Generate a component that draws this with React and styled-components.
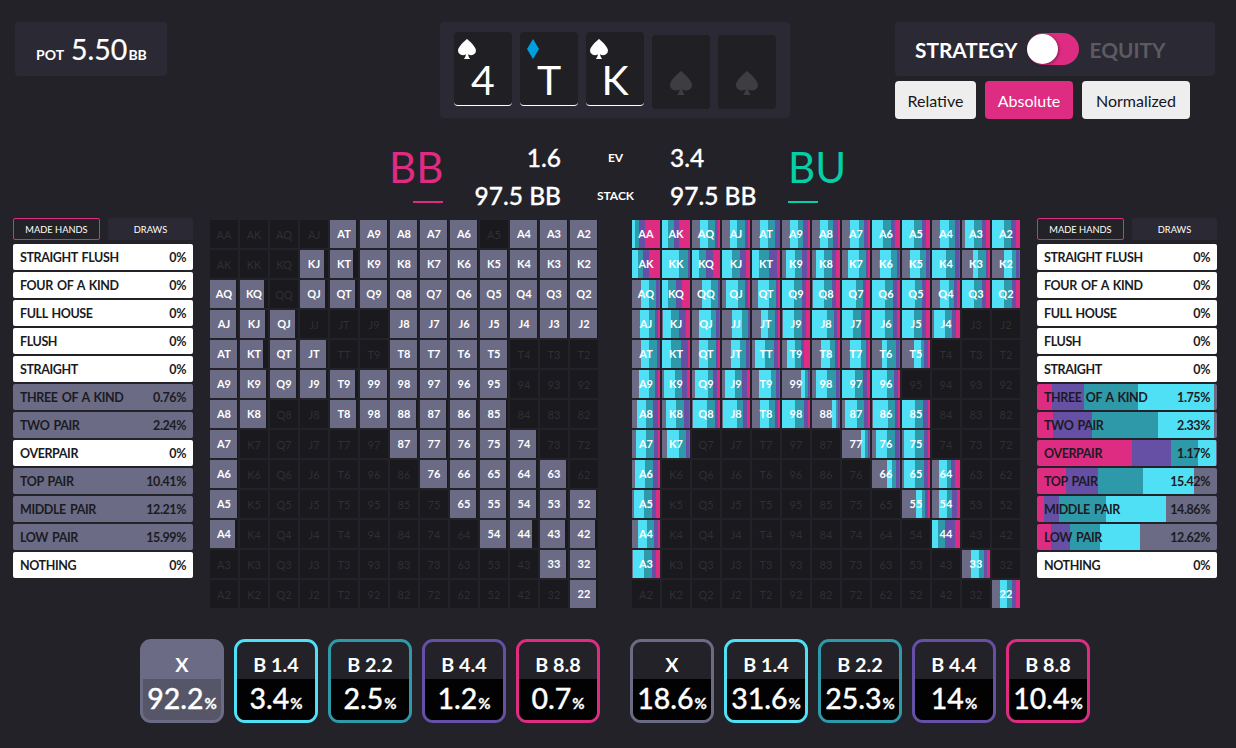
import React from "react";
import styled, { createGlobalStyle } from "styled-components";

const GRAY = "#6b6b85";
const CYAN = "#4fe0f6";
const TEAL = "#2e9aa9";
const PURPLE = "#6650a6";
const PINK = "#dd2c82";
const GREEN = "#05cfa6";

const GlobalStyle = createGlobalStyle`
  html, body {
    margin: 0;
    padding: 0;
    background: #232228;
    font-family: "Lato", "Liberation Sans", sans-serif;
    color: #fff;
  }
  * { box-sizing: border-box; }
`;

const Page = styled.div`
  width: 1236px;
  height: 748px;
  overflow: hidden;
`;

const Header = styled.header`
  display: grid;
  grid-template-columns: 425px 455px 320px;
  padding: 22px 0 0 15px;
  height: 119px;
  align-items: start;
`;

const Panel = styled.div`
  background: #2b2933;
  border-radius: 4px;
`;

const Pot = styled(Panel)`
  width: 152px;
  height: 54px;
  display: flex;
  align-items: baseline;
  padding: 9px 0 0 21px;
  font-weight: 700;
  font-size: 14px;
  b { font-weight: 400; font-size: 28.5px; margin: 0 1px 0 7px; line-height: 36px; -webkit-text-stroke: 0.2px #fff; }
`;

const Board = styled(Panel)`
  width: 350px;
  height: 96px;
  display: flex;
  align-items: flex-start;
  gap: 8px;
  padding: 10px 14px;
`;

const BoardCard = styled.div`
  width: 58px;
  height: 74px;
  background: #201f24;
  border-radius: 4px;
  border-bottom: 1px solid #fff;
  padding: 7px 0 0 4px;
`;

const EmptyCard = styled(BoardCard)`
  margin-top: 3px;
  border-bottom: 0;
  padding: 36px 0 0 18px;
`;

const Suit = styled.svg`
  display: block;
  width: ${(p) => p.$w}px;
  height: ${(p) => p.$h}px;
  margin-left: ${(p) => p.$x || 0}px;
  fill: ${(p) => p.$color};
`;

const Rank = styled.div`
  margin: -1px 0 0 -4px;
  text-align: center;
  font-size: 41px;
  line-height: 44px;
`;

const Controls = styled.div`
  display: flex;
  flex-direction: column;
  gap: 5px;
`;

const ModeSwitch = styled(Panel)`
  height: 54px;
  display: flex;
  align-items: center;
  padding: 0 0 0 20px;
  font-size: 20.8px;
  font-weight: 700;
`;

const ModeLabel = styled.span`
  color: ${(p) => (p.$off ? "#5c5b62" : "#fff")};
  margin-left: ${(p) => (p.$off ? 11 : 0)}px;
  margin-right: ${(p) => (p.$off ? 0 : 9)}px;
`;

const Toggle = styled.div`
  position: relative;
  width: 52px;
  height: 32px;
  border-radius: 16px;
  background: ${PINK};
  &::after {
    content: "";
    position: absolute;
    left: 0;
    top: 1px;
    width: 31px;
    height: 30px;
    border-radius: 50%;
    background: #fff;
    box-shadow: 1px 1px 3px rgba(0, 0, 0, 0.4);
  }
`;

const ScaleRow = styled.div`
  display: flex;
  gap: 9px;
`;

const ScaleButton = styled.div`
  width: ${(p) => p.$w}px;
  height: 38px;
  display: flex;
  align-items: center;
  justify-content: center;
  border-radius: 4px;
  font-size: 16px;
  background: ${(p) => (p.$active ? PINK : "#eee")};
  color: ${(p) => (p.$active ? "#fff" : "#17161b")};
`;

const Matchup = styled.section`
  display: grid;
  grid-template-columns: 54px 118px 109px 118px auto;
  grid-template-rows: 38px 38px;
  height: 99px;
  padding: 19px 0 0 389px;
  align-items: center;
`;

const Player = styled.div`
  grid-row: 1 / 3;
  grid-column: ${(p) => p.$col};
  width: 58px;
  height: 66px;
  align-self: start;
  font-size: 42px;
  line-height: 58px;
  color: ${(p) => p.$color};
  position: relative;
  &::after {
    content: "";
    position: absolute;
    top: 63px;
    ${(p) => (p.$right ? "left: 24px;" : "left: 0;")}
    width: 30px;
    height: 2px;
    background: ${(p) => p.$color};
  }
`;

const Stat = styled.div`
  grid-column: ${(p) => p.$col};
  font-size: 24.5px;
  font-weight: 500;
  text-align: ${(p) => (p.$col === 2 ? "right" : "left")};
  -webkit-text-stroke: 0.3px #fff;
`;

const StatLabel = styled.div`
  grid-column: 3;
  font-size: 12px;
  font-weight: 700;
  text-align: center;
`;

const Main = styled.main`
  display: flex;
  gap: 17px;
  padding-left: 13px;
  height: 390px;
`;

const Side = styled.aside`
  width: 180px;
  display: flex;
  flex-direction: column;
  gap: 2px;
`;

const Tabs = styled.div`
  display: grid;
  grid-template-columns: 87px 85px;
  gap: 8px;
  margin-bottom: 2px;
`;

const Tab = styled.div`
  height: 22px;
  display: flex;
  align-items: center;
  justify-content: center;
  border-radius: 2px;
  font-size: 9.3px;
  border: ${(p) => (p.$active ? `1px solid ${PINK}` : "0")};
  background: ${(p) => (p.$active ? "transparent" : "#2b2933")};
`;

const HandRow = styled.div`
  height: 26px;
  display: flex;
  align-items: center;
  justify-content: space-between;
  padding: 0 7px;
  border-radius: 2px;
  background: #fff;
  color: #1c1b22;
  font-size: 12.5px;
  font-weight: 700;
  letter-spacing: -0.4px;
  word-spacing: 1.5px;
`;

const Charts = styled.div`
  display: flex;
  gap: 34px;
  padding-top: 2px;
`;

const Chart = styled.div`
  display: grid;
  grid-template-columns: repeat(13, 28px);
  grid-auto-rows: 28px;
  gap: 2px;
`;

const Cell = styled.div`
  display: flex;
  align-items: center;
  justify-content: center;
  background-color: #1a191d;
  font-size: 11px;
  font-weight: ${(p) => (p.$on ? 700 : 400)};
  color: ${(p) => (p.$on ? "#fff" : "#302f33")};
  padding-bottom: ${(p) => (p.$on ? 2 : 0)}px;
`;

const Actions = styled.section`
  display: flex;
  gap: 30px;
  padding: 31px 0 0 140px;
`;

const ActionGroup = styled.div`
  display: flex;
  gap: 10px;
`;

const ActionCard = styled.div`
  width: 84px;
  height: 84px;
  display: flex;
  flex-direction: column;
  border: 3px solid ${(p) => p.$color};
  border-radius: 11px;
  overflow: hidden;
  background: ${(p) => (p.$selected ? p.$color : "transparent")};
`;

const ActionName = styled.div`
  height: 37px;
  flex: none;
  display: flex;
  align-items: center;
  justify-content: center;
  padding-top: 6px;
  font-size: 19.8px;
  font-weight: 700;
`;

const ActionValue = styled.div`
  flex: 1;
  display: flex;
  align-items: baseline;
  justify-content: center;
  padding-top: 1px;
  background: ${(p) => (p.$selected ? "#565668" : "#020203")};
  font-size: 28.5px;
  font-weight: 500;
  line-height: 36px;
  -webkit-text-stroke: 0.3px #fff;
  span { font-size: 15px; font-weight: 700; margin-left: 1px; }
`;

const SPADE =
  "M12 0C12 0 2 8.500 2 14a5.400 5.400 0 0 0 8.800 4.200c-.2 2.300-1 4-2.300 5.800h7c-1.300-1.800-2.100-3.500-2.300-5.800A5.400 5.400 0 0 0 22 14C22 8.500 12 0 12 0z";
const DIAMOND = "M12 0 22 12 12 24 2 12z";

const RANKS = "AKQJT98765432".split("");

// fill width in px of each cell, 0 means the hand is out of the range
const BB_FILLS = [
  [0, 0, 0, 0, 26, 27, 27, 27, 27, 0, 27, 27, 27],
  [0, 0, 0, 24, 23, 27, 27, 27, 27, 27, 27, 27, 27],
  [26, 24, 0, 25, 25, 27, 27, 27, 27, 27, 27, 27, 27],
  [26, 25, 25, 0, 0, 0, 27, 27, 27, 27, 27, 27, 27],
  [27, 23, 26, 26, 0, 0, 27, 27, 27, 27, 0, 0, 0],
  [27, 26, 26, 26, 25, 27, 27, 27, 27, 27, 0, 0, 0],
  [27, 26, 0, 0, 26, 27, 26, 26, 26, 26, 0, 0, 0],
  [27, 0, 0, 0, 0, 0, 27, 26, 26, 26, 26, 0, 0],
  [27, 0, 0, 0, 0, 0, 0, 27, 26, 26, 26, 26, 0],
  [27, 0, 0, 0, 0, 0, 0, 0, 26, 26, 26, 26, 26],
  [25, 0, 0, 0, 0, 0, 0, 0, 0, 26, 22, 25, 25],
  [0, 0, 0, 0, 0, 0, 0, 0, 0, 0, 0, 26, 26],
  [0, 0, 0, 0, 0, 0, 0, 0, 0, 0, 0, 0, 26],
];

// px of gray, cyan, teal, purple, pink in each cell
const BU_MIX = [
  ["0 3 4 6 15", "0 6 6 5 11", "8 8 7 3 2", "8 7 8 3 2", "8 8 7 5 0", "8 8 5 5 2", "8 8 5 5 2", "8 9 5 4 2", "0 11 8 4 5", "0 12 8 4 4", "8 9 6 4 1", "3 9 8 4 4", "0 12 7 5 4"],
  ["0 6 5 6 11", "0 17 9 2 0", "0 7 7 7 7", "0 10 8 6 4", "0 7 10 8 3", "4 9 7 5 3", "4 8 8 4 4", "6 11 7 2 2", "8 11 6 2 1", "8 10 6 3 1", "0 14 9 4 1", "11 5 8 2 2", "12 8 4 3 1"],
  ["9 8 7 3 1", "0 6 8 6 8", "10 9 7 2 0", "4 12 7 3 2", "6 11 7 2 2", "0 12 8 4 4", "1 11 8 4 4", "0 14 7 3 4", "0 13 8 4 3", "0 13 7 4 4", "8 9 5 3 3", "0 12 8 4 4", "0 12 8 4 4"],
  ["8 9 6 3 2", "1 8 8 7 4", "7 12 5 3 1", "10 10 6 2 0", "9 7 7 3 2", "1 11 8 4 4", "0 15 7 3 3", "0 11 8 4 5", "0 13 8 4 3", "0 12 8 4 4", "2 11 7 4 4"],
  ["9 8 8 3 0", "0 9 10 7 2", "7 9 8 2 2", "9 9 6 3 1", "3 10 9 4 2", "5 8 6 3 6", "9 9 5 3 2", "8 11 5 2 2", "10 5 9 3 1", "12 7 3 4 2"],
  ["7 10 6 3 2", "2 11 7 5 3", "3 13 5 4 3", "3 10 7 5 3", "7 12 5 3 1", "19 4 3 1 1", "4 11 9 3 1", "0 13 8 4 3", "0 15 7 4 2"],
  ["5 9 7 5 2", "4 10 8 5 1", "1 14 8 3 2", "1 14 6 4 3", "8 9 6 3 2", "0 13 9 4 2", "20 4 2 1 1", "3 12 7 4 2", "1 15 7 3 2", "0 13 8 5 2"],
  ["4 10 8 4 2", "5 12 7 3 1", "", "", "", "", "", "19 4 3 1 1", "4 11 8 4 1", "2 11 9 4 2"],
  ["3 10 8 5 2", "", "", "", "", "", "", "", "15 5 4 3 1", "2 11 9 4 2", "7 8 4 4 5"],
  ["2 10 8 4 4", "", "", "", "", "", "", "", "", "14 6 3 3 2", "7 8 5 5 3"],
  ["6 9 7 4 2", "", "", "", "", "", "", "", "", "", "0 6 7 10 5"],
  ["1 11 8 4 4", "", "", "", "", "", "", "", "", "", "", "9 8 5 3 3"],
  ["", "", "", "", "", "", "", "", "", "", "", "", "8 7 5 4 4"],
];

const MIX_COLORS = [GRAY, CYAN, TEAL, PURPLE, PINK];

// hard-edged gradient out of a list of [colour, px] pairs
const stripes = (parts) => {
  let at = 0;
  const stops = parts.map(([color, size]) => {
    const stop = `${color} ${at}px ${at + size}px`;
    at += size;
    return stop;
  });
  return `linear-gradient(90deg, ${stops.join(", ")})`;
};

const handLabel = (r, c) => (r <= c ? RANKS[r] + RANKS[c] : RANKS[c] + RANKS[r]);

const BBChart = () => (
  <Chart>
    {BB_FILLS.map((row, r) =>
      row.map((w, c) => (
        <Cell
          key={c}
          $on={w > 0}
          style={w ? { backgroundImage: stripes([[GRAY, w]]), backgroundSize: `${w}px 100%`, backgroundRepeat: "no-repeat" } : undefined}
        >
          {handLabel(r, c)}
        </Cell>
      ))
    )}
  </Chart>
);

const BUChart = () => (
  <Chart>
    {RANKS.map((_, r) =>
      RANKS.map((__, c) => {
        const mix = BU_MIX[r][c];
        const parts = mix ? mix.split(" ").map((v, i) => [MIX_COLORS[i], Number(v)]) : null;
        return (
          <Cell key={c} $on={!!mix} style={parts ? { backgroundImage: stripes(parts) } : undefined}>
            {handLabel(r, c)}
          </Cell>
        );
      })
    )}
  </Chart>
);

const HANDS = ["STRAIGHT FLUSH", "FOUR OF A KIND", "FULL HOUSE", "FLUSH", "STRAIGHT", "THREE OF A KIND", "TWO PAIR", "OVERPAIR", "TOP PAIR", "MIDDLE PAIR", "LOW PAIR", "NOTHING"];
const BB_HANDS = ["0%", "0%", "0%", "0%", "0%", "0.76%", "2.24%", "0%", "10.41%", "12.21%", "15.99%", "0%"];
const BU_HANDS = ["0%", "0%", "0%", "0%", "0%", "1.75%", "2.33%", "1.17%", "15.42%", "14.86%", "12.62%", "0%"];

// px of pink, purple, teal, cyan, gray in each BU hand bar
const BU_BARS = {
  "THREE OF A KIND": [15, 32, 54, 76, 3],
  "TWO PAIR": [16, 39, 66, 56, 3],
  OVERPAIR: [95, 39, 27, 18, 1],
  "TOP PAIR": [29, 32, 45, 51, 23],
  "MIDDLE PAIR": [7, 15, 47, 60, 51],
  "LOW PAIR": [14, 19, 30, 40, 77],
};
const BAR_COLORS = [PINK, PURPLE, TEAL, CYAN, GRAY];

const HandList = ({ values, bars }) => (
  <Side>
    <Tabs>
      <Tab $active>MADE HANDS</Tab>
      <Tab>DRAWS</Tab>
    </Tabs>
    {HANDS.map((name, i) => {
      const empty = values[i] === "0%";
      let background;
      if (!empty) {
        background = bars ? stripes(bars[name].map((w, j) => [BAR_COLORS[j], w])) : GRAY;
      }
      return (
        <HandRow key={name} style={background ? { background } : undefined}>
          <span>{name}</span>
          <span>{values[i]}</span>
        </HandRow>
      );
    })}
  </Side>
);

const ACTION_NAMES = ["X", "B 1.4", "B 2.2", "B 4.4", "B 8.8"];

const ActionList = ({ values, selected }) => (
  <ActionGroup>
    {ACTION_NAMES.map((name, i) => (
      <ActionCard key={name} $color={MIX_COLORS[i]} $selected={i === selected}>
        <ActionName>{name}</ActionName>
        <ActionValue $selected={i === selected}>
          {values[i]}
          <span>%</span>
        </ActionValue>
      </ActionCard>
    ))}
  </ActionGroup>
);

const Icon = ({ d, w, h, x, color }) => (
  <Suit viewBox="2 0 20 24" preserveAspectRatio="none" $w={w} $h={h} $x={x} $color={color}>
    <path d={d} />
  </Suit>
);

const App = () => (
  <Page>
    <GlobalStyle />
    <Header>
      <Pot>
        POT<b>5.50</b>BB
      </Pot>
      <Board>
        <BoardCard>
          <Icon d={SPADE} w={18} h={20} color="#fff" />
          <Rank>4</Rank>
        </BoardCard>
        <BoardCard>
          <Icon d={DIAMOND} w={12} h={20} x={3} color="#00a0e0" />
          <Rank>T</Rank>
        </BoardCard>
        <BoardCard>
          <Icon d={SPADE} w={18} h={20} color="#fff" />
          <Rank>K</Rank>
        </BoardCard>
        <EmptyCard>
          <Icon d={SPADE} w={22} h={24} color="#3e3d42" />
        </EmptyCard>
        <EmptyCard>
          <Icon d={SPADE} w={22} h={24} color="#3e3d42" />
        </EmptyCard>
      </Board>
      <Controls>
        <ModeSwitch>
          <ModeLabel>STRATEGY</ModeLabel>
          <Toggle />
          <ModeLabel $off>EQUITY</ModeLabel>
        </ModeSwitch>
        <ScaleRow>
          <ScaleButton $w={81}>Relative</ScaleButton>
          <ScaleButton $w={88} $active>Absolute</ScaleButton>
          <ScaleButton $w={108}>Normalized</ScaleButton>
        </ScaleRow>
      </Controls>
    </Header>
    <Matchup>
      <Player $col={1} $color={PINK} $right>BB</Player>
      <Stat $col={2}>1.6</Stat>
      <StatLabel>EV</StatLabel>
      <Stat $col={4}>3.4</Stat>
      <Player $col={5} $color={GREEN}>BU</Player>
      <Stat $col={2}>97.5 BB</Stat>
      <StatLabel>STACK</StatLabel>
      <Stat $col={4}>97.5 BB</Stat>
    </Matchup>
    <Main>
      <HandList values={BB_HANDS} />
      <Charts>
        <BBChart />
        <BUChart />
      </Charts>
      <HandList values={BU_HANDS} bars={BU_BARS} />
    </Main>
    <Actions>
      <ActionList values={["92.2", "3.4", "2.5", "1.2", "0.7"]} selected={0} />
      <ActionList values={["18.6", "31.6", "25.3", "14", "10.4"]} />
    </Actions>
  </Page>
);

export default App;
